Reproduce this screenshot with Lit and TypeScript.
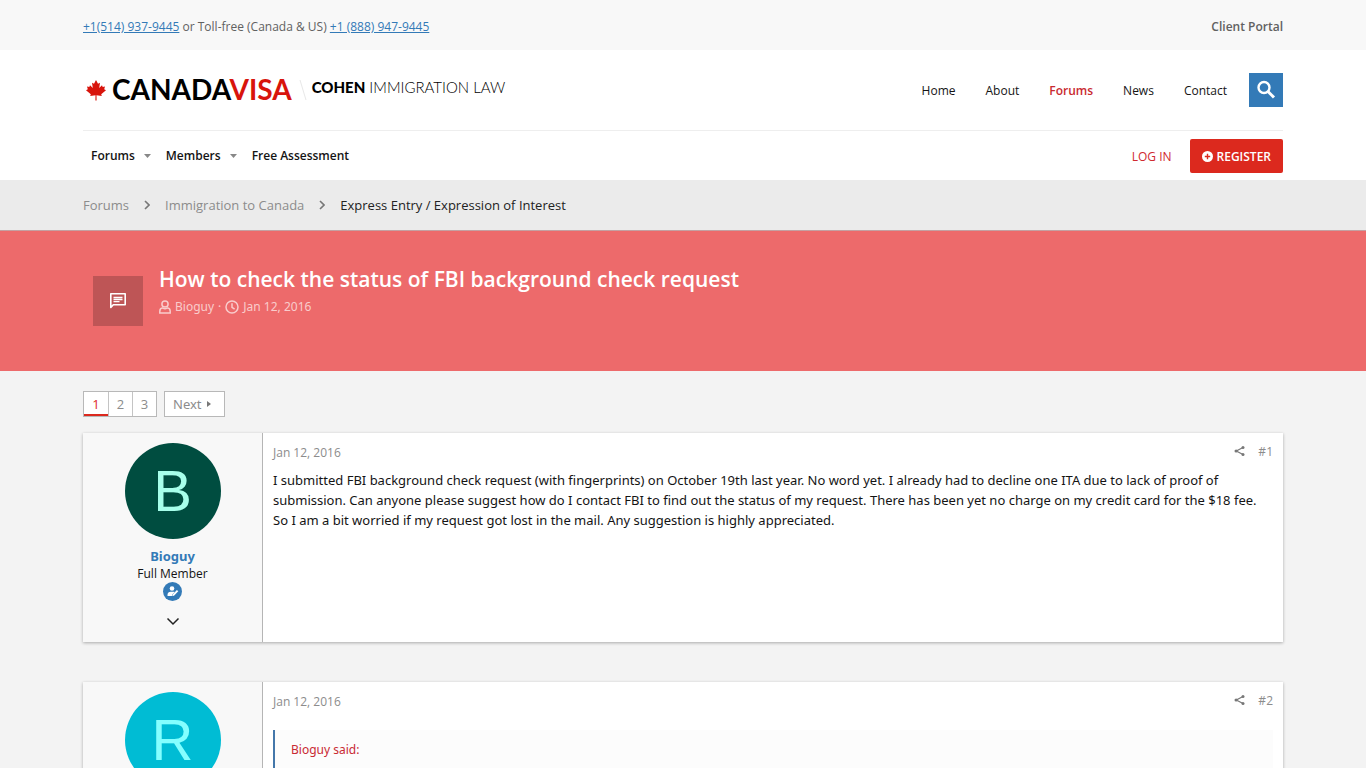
import { LitElement, html, css, svg, nothing } from "lit";
import { customElement, property } from "lit/decorators.js";

const leaf = svg`<path fill="#d8140c" d="M10 0 12 3.800 14 2.800 13.200 8 16 5.300 16.700 7 19 6.400 18.200 9.300 20 10.200 15.200 14.200 15.800 16 10.500 15.300 10.600 20.500H9.400L9.500 15.300 4.200 16 4.800 14.200 0 10.200 1.800 9.300 1 6.400 3.300 7 4 5.300 6.800 8 6 2.800 8 3.800z"/>`;

interface Post {
  id: number;
  user: string;
  letter: string;
  bg: string;
  fg: string;
  date: string;
  text: string;
  quote: string;
}

const posts: Post[] = [
  {
    id: 1,
    user: "Bioguy",
    letter: "B",
    bg: "#004d40",
    fg: "#a7ffeb",
    date: "Jan 12, 2016",
    text: "I submitted FBI background check request (with fingerprints) on October 19th last year. No word yet. I already had to decline one ITA due to lack of proof of submission. Can anyone please suggest how do I contact FBI to find out the status of my request. There has been yet no charge on my credit card for the $18 fee. So I am a bit worried if my request got lost in the mail. Any suggestion is highly appreciated.",
    quote: "",
  },
  {
    id: 2,
    user: "",
    letter: "R",
    bg: "#00bcd4",
    fg: "#84ffff",
    date: "Jan 12, 2016",
    text: "",
    quote: "Bioguy said:",
  },
];

@customElement("forum-post")
export class ForumPost extends LitElement {
  @property({ attribute: false }) post!: Post;

  static styles = css`
    :host { display: block; }
    a { color: inherit; text-decoration: none; }
    .post {
      display: grid;
      grid-template-columns: 180px 1fr;
      background: #fff;
      box-shadow: 0 1px 3px rgba(0, 0, 0, 0.3);
    }
    .user {
      box-sizing: border-box;
      min-height: 209px;
      padding: 10px 10px 12px;
      border-right: 1px solid #b5b5b5;
      background: #f8f8f8;
      display: flex;
      flex-direction: column;
      align-items: center;
    }
    .avatar {
      width: 96px;
      height: 96px;
      border-radius: 50%;
      display: flex;
      align-items: center;
      justify-content: center;
      font: 58px/96px "Liberation Sans", Arial, sans-serif;
    }
    .name {
      margin-top: 8px;
      font-family: "Noto Sans", sans-serif;
      font-size: 13px;
      font-weight: 700;
      line-height: 18px;
      color: #337ab7;
    }
    .role { font-size: 12px; line-height: 17px; color: #141414; }
    .badge { display: block; width: 19px; height: 19px; }
    .more {
      margin-top: 12px;
      padding: 0;
      border: 0;
      background: none;
      line-height: 0;
    }
    .main { padding: 10px; min-width: 0; }
    .head {
      display: flex;
      justify-content: space-between;
      align-items: center;
      height: 18px;
      font-size: 12px;
      color: #8c8c8c;
    }
    .tools { display: flex; align-items: center; gap: 13px; padding-bottom: 2px; }
    .tools a { display: flex; }
    .text { margin: 9px 0 0; font-family: "Noto Sans", sans-serif; font-size: 13px; line-height: 20px; color: #141414; }
    .quote {
      margin: 20px 0 0;
      padding: 10px 16px;
      min-height: 80px;
      border-left: 2px solid #47a;
      background: #fcfcfc;
      font-family: "Noto Sans", sans-serif;
      font-size: 12px;
      line-height: 20px;
      color: #c92a33;
    }
  `;

  render() {
    const p = this.post;
    return html`
      <article class="post">
        <div class="user">
          <a class="avatar" href="#" style="background:${p.bg};color:${p.fg}">${p.letter}</a>
          ${p.user
            ? html`
                <a class="name" href="#">${p.user}</a>
                <span class="role">Full Member</span>
                <svg class="badge" viewBox="0 0 19 19">
                  <circle cx="9.500" cy="9.500" r="9.500" fill="#337ab7" />
                  <circle cx="9" cy="6.500" r="2.300" fill="#fff" />
                  <path fill="#fff" d="M4.500 14v-1.300c0-1.800 1.400-3 3.200-3h2.600c.5 0 1 .1 1.500.3L9.200 12.600 8.900 14z" />
                  <path fill="#fff" d="m13.900 8 1.400 1.300-4.300 4.500-1.700.3.3-1.700z" />
                </svg>
                <button class="more" aria-label="Show details">
                  <svg width="14" height="17" viewBox="0 0 14 17" fill="none" stroke="#222" stroke-width="1.500">
                    <path d="m1.500 5.500 5.500 5.500 5.500-5.500" />
                  </svg>
                </button>
              `
            : nothing}
        </div>
        <div class="main">
          <header class="head">
            <a href="#">${p.date}</a>
            <span class="tools">
              <a href="#" aria-label="Share">
                <svg width="11" height="12" viewBox="0 0 11 12">
                  <path d="M9 2.500 2.300 6 9 9.500" fill="none" stroke="#777" stroke-width="1.200" />
                  <g fill="#777"><circle cx="9" cy="2.400" r="1.500" /><circle cx="2.100" cy="6" r="1.600" /><circle cx="9" cy="9.600" r="1.500" /></g>
                </svg>
              </a>
              <a href="#">#${p.id}</a>
            </span>
          </header>
          ${p.text ? html`<p class="text">${p.text}</p>` : nothing}
          ${p.quote ? html`<blockquote class="quote"><a href="#">${p.quote}</a></blockquote>` : nothing}
        </div>
      </article>
    `;
  }
}

@customElement("app-root")
export class AppRoot extends LitElement {
  static styles = css`
    :host {
      display: block;
      min-height: 100vh;
      background: #f3f3f3;
      font-family: "Open Sans", "Noto Sans", sans-serif;
      font-size: 12px;
      color: #141414;
    }
    a { color: inherit; text-decoration: none; }
    .wrap { box-sizing: border-box; max-width: 1220px; margin: 0 auto; padding: 0 10px; }
    .row { display: flex; align-items: center; justify-content: space-between; }
    .top { background: #f8f8f8; color: #616161; }
    .top .row { height: 50px; padding-top: 2px; box-sizing: border-box; }
    .phone { color: #337ab7; text-decoration: underline; }
    .strong { font-weight: 600; }
    .header { background: #fff; }
    .brand { height: 80px; border-bottom: 1px solid #eee; }
    .logo { display: flex; align-items: center; font-family: Lato, sans-serif; color: #000; white-space: nowrap; }
    .leaf { width: 20px; height: 21px; margin: 0 6px 0 3px; }
    .visa { font-size: 28px; font-weight: 700; line-height: 34px; padding-bottom: 2px; }
    .red { color: #d8140c; }
    .slash { width: 10px; height: 22px; margin: 0 4px 0 6px; }
    .firm { font-size: 15px; font-weight: 300; line-height: 20px; padding-bottom: 6px; }
    .firm b { font-weight: 900; }
    .menu { display: flex; align-items: center; gap: 30px; }
    .current { color: #c92a2f; font-weight: 600; }
    .search {
      width: 34px; height: 34px; padding: 0; border: 0; margin-left: -8px;
      background: #337ab7; display: grid; place-items: center;
    }
    .nav { height: 49px; font-weight: 600; }
    .tabs { display: flex; align-items: center; padding-left: 8px; }
    .caret { width: 7px; height: 4px; margin: 0 15px 0 9px; }
    .account { display: flex; align-items: center; gap: 18px; color: #d02a30; font-weight: 400; padding-top: 1px; }
    .register {
      display: flex; align-items: center; gap: 4px; height: 34px; padding: 0 12px;
      border: 0; border-radius: 2px; background: #dc291e; color: #fff;
      font: inherit; font-weight: 600;
    }
    .crumbs { background: #ebebeb; border-bottom: 1px solid #c4a0a2; font-size: 13px; color: #8c8c8c; }
    .trail { display: flex; align-items: center; gap: 15px; height: 50px; }
    .here { color: #222; }
    .banner { background: #ed6a6b; color: #fff; }
    .title-row { display: flex; gap: 16px; min-height: 140px; box-sizing: border-box; padding: 34px 10px 0; }
    .tile { width: 50px; height: 50px; margin-top: 11px; background: #be5556; display: grid; place-items: center; flex: none; }
    h1 { margin: 0; font-size: 21px; line-height: 28px; font-weight: 600; }
    .meta { display: flex; align-items: center; gap: 4px; font-family: "Noto Sans", sans-serif; line-height: 20px; margin-top: 4px; color: #f9cccc; }
    .pager { display: flex; gap: 7px; padding: 20px 0 16px; font-size: 13px; color: #8c8c8c; }
    .pages { display: flex; background: #fff; border: 1px solid #b8b8b8; }
    .page { box-sizing: border-box; width: 24px; line-height: 24px; text-align: center; border-left: 1px solid #c4c4c4; }
    .page:first-child { border-left: 0; color: #dc291e; box-shadow: inset 0 -2px #dc291e; }
    .next { display: flex; align-items: center; gap: 5px; padding: 0 13px 0 8px; font-family: "Noto Sans", sans-serif; line-height: 24px; background: #fff; border: 1px solid #b8b8b8; }
    .posts { display: flex; flex-direction: column; gap: 40px; padding-bottom: 40px; }
  `;

  private caret() {
    return html`<svg class="caret" viewBox="0 0 7 4"><path fill="#888" d="M0 0h7L3.500 4z" /></svg>`;
  }

  private chevron() {
    return html`<svg width="6" height="10" viewBox="0 0 6 10" fill="none" stroke="#777" stroke-width="1.600"><path d="m1 1 4 4-4 4" /></svg>`;
  }

  render() {
    return html`
      <div class="top">
        <div class="wrap">
          <div class="row">
            <span><a class="phone" href="#">+1(514) 937-9445</a> or Toll-free (Canada &amp; US) <a class="phone" href="#">+1 (888) 947-9445</a></span>
            <a class="strong" href="#">Client Portal</a>
          </div>
        </div>
      </div>
      <header class="header">
        <div class="wrap">
          <div class="row brand">
            <a class="logo" href="#">
              <svg class="leaf" viewBox="0 0 20 21">${leaf}</svg>
              <span class="visa">CANADA<span class="red">VISA</span></span>
              <svg class="slash" viewBox="0 0 10 22"><path d="m2 1 6 20" stroke="#e8e8e8" fill="none" /></svg>
              <span class="firm"><b>COHEN</b> IMMIGRATION LAW</span>
            </a>
            <nav class="menu">
              <a href="#">Home</a>
              <a href="#">About</a>
              <a class="current" href="#">Forums</a>
              <a href="#">News</a>
              <a href="#">Contact</a>
              <button class="search" aria-label="Search">
                <svg width="20" height="20" viewBox="0 0 20 20" fill="none" stroke="#fff"><circle cx="8" cy="7.500" r="5.500" stroke-width="2.400" /><path d="m12 11.500 6 6" stroke-width="3" /></svg>
              </button>
            </nav>
          </div>
          <div class="row nav">
            <nav class="tabs">
              <a href="#">Forums</a>${this.caret()}
              <a href="#">Members</a>${this.caret()}
              <a href="#">Free Assessment</a>
            </nav>
            <div class="account">
              <a href="#">LOG IN</a>
              <button class="register">
                <svg width="11" height="11" viewBox="0 0 11 11"><circle cx="5.500" cy="5.500" r="5.500" fill="#fff" /><path d="M5.500 2.800v5.400M2.800 5.500h5.400" stroke="#dc291e" stroke-width="1.400" /></svg>
                REGISTER
              </button>
            </div>
          </div>
        </div>
      </header>
      <div class="crumbs">
        <nav class="wrap trail">
          <a href="#">Forums</a>${this.chevron()}
          <a href="#">Immigration to Canada</a>${this.chevron()}
          <a class="here" href="#">Express Entry / Expression of Interest</a>
        </nav>
      </div>
      <div class="banner">
        <div class="wrap">
          <div class="title-row">
            <div class="tile">
              <svg width="16" height="16" viewBox="0 0 16 16" fill="none" stroke="#fff"><path d="M.8 14.500V.8h14.400v11H3.300z" stroke-width="1.600" stroke-linejoin="round" /><path d="M3.500 4.500h9M3.500 6.500h9M3.500 8.700h6" stroke-width="1.300" /></svg>
            </div>
            <div>
              <h1>How to check the status of FBI background check request</h1>
              <div class="meta">
                <svg width="12" height="14" viewBox="0 0 12 14" fill="none" stroke="currentColor" stroke-width="1.500"><circle cx="6" cy="4" r="3.100" /><path d="M3.800 8C2 8 .8 9.500.8 11.200v1.900h10.400v-1.900C11.200 9.500 10 8 8.200 8 7 8.800 5 8.800 3.800 8z" /></svg>
                <a href="#">Bioguy</a><span>·</span>
                <svg width="14" height="14" viewBox="0 0 14 14" fill="none" stroke="currentColor" stroke-width="1.500"><circle cx="7" cy="7" r="6" /><path d="M7 3.200V7.300l2.600 1.900" /></svg>
                <a href="#">Jan 12, 2016</a>
              </div>
            </div>
          </div>
        </div>
      </div>
      <main class="wrap">
        <nav class="pager">
          <div class="pages">
            <a class="page" href="#">1</a><a class="page" href="#">2</a><a class="page" href="#">3</a>
          </div>
          <a class="next" href="#">Next <svg width="4" height="6" viewBox="0 0 4 6"><path fill="#777" d="M0 0v6l4-3z" /></svg></a>
        </nav>
        <div class="posts">${posts.map((p) => html`<forum-post .post=${p}></forum-post>`)}</div>
      </main>
    `;
  }
}
